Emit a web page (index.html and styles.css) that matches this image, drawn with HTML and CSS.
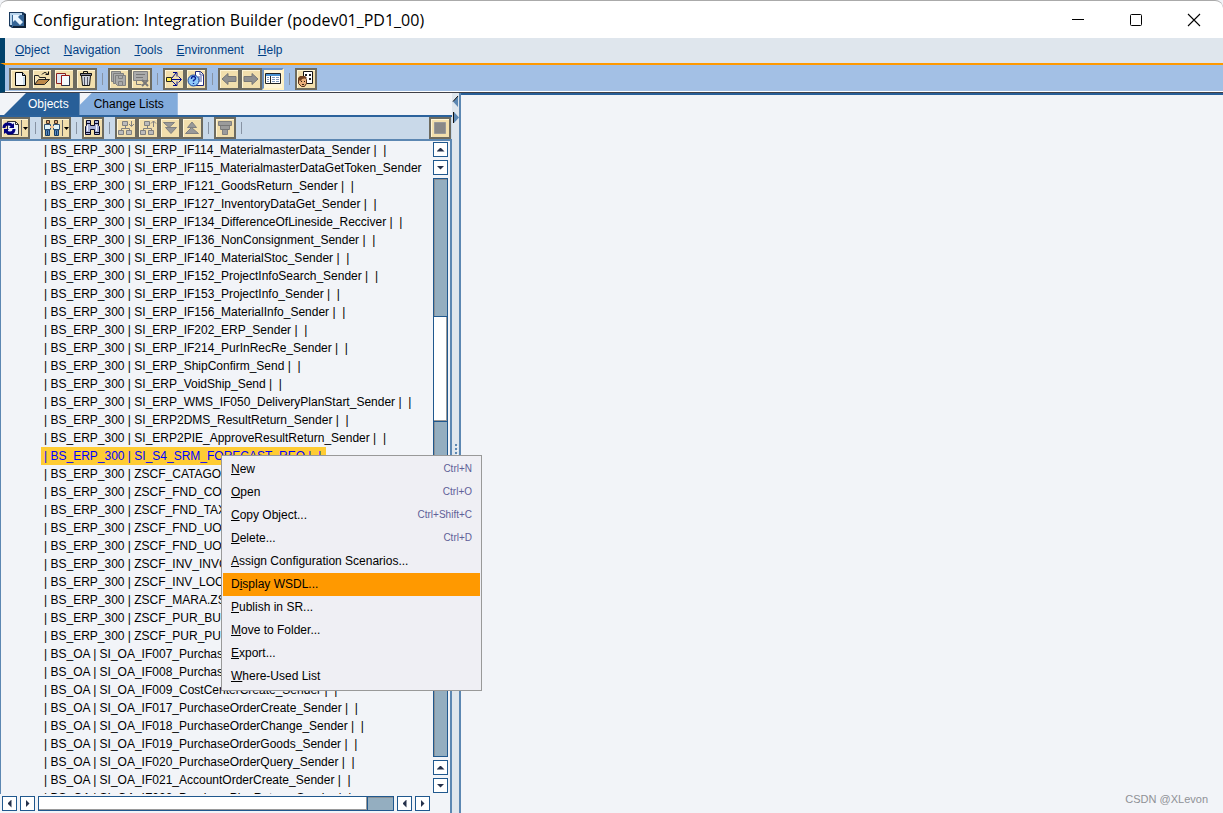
FILE: index.html
```html
<!DOCTYPE html>
<html lang="en">
<head>
<meta charset="utf-8">
<title>Configuration: Integration Builder (podev01_PD1_00)</title>
<link rel="stylesheet" href="styles.css">
</head>
<body>
<div class="window">
<header class="titlebar">
  <svg class="app-icon" width="18" height="18" viewBox="0 0 18 18"><path d="M0 1h14l3 2v14H3l-3-2z" fill="#18385c"/><path d="M1 2h12v12H1z" fill="#b8d4ec"/><path d="M3 4h12v12H3z" fill="#356596"/><path d="M4 4h7L9 6l5 5-3 3-5-5-2 2z" fill="#e7f4ff"/><path d="M15 3h2v14H4v-2h11z" fill="#102238"/></svg>
  <h1 class="title">Configuration: Integration Builder (podev01_PD1_00)</h1>
  <div class="window-controls">
    <button class="window-button" aria-label="Minimize"><svg width="14" height="14"><path d="M1 6.500h12" stroke="#000"/></svg></button>
    <button class="window-button" aria-label="Maximize"><svg width="14" height="14"><rect x="1.500" y="1.500" width="11" height="11" rx="1" fill="none" stroke="#000"/></svg></button>
    <button class="window-button" aria-label="Close"><svg width="14" height="14"><path d="M1 1l12 12M13 1L1 13" stroke="#000" stroke-width="1.100"/></svg></button>
  </div>
</header>
<nav class="menubar">
  <button class="menu"><u>O</u>bject</button>
  <button class="menu"><u>N</u>avigation</button>
  <button class="menu"><u>T</u>ools</button>
  <button class="menu"><u>E</u>nvironment</button>
  <button class="menu"><u>H</u>elp</button>
</nav>
<div class="toolbar main-toolbar">
  <button class="tool" aria-label="New"><svg width="18" height="18"><path d="M4.500 2.500h7l3 3v10h-10z" fill="#f4f8fb" stroke="#000"/><path d="M11.500 2.500v3h3" fill="#bcd" stroke="#000"/><path d="M13 7v8" stroke="#9fc0d8"/></svg></button>
  <button class="tool" aria-label="Open"><svg width="18" height="18"><path d="M1.500 14.500v-9h4l1 2h6v3" fill="#f7e6b8" stroke="#222"/><path d="M1.500 14.500l4-5h11l-5 5z" fill="#bb8748" stroke="#222"/><path d="M9 4.500q3-4 6 0M15.500 1.500v3h-3" fill="none" stroke="#111"/></svg></button>
  <button class="tool" aria-label="Copy"><svg width="18" height="18"><path d="M1.500 3.500h9v10h-9z" fill="#dce7f2" stroke="#8c2020"/><path d="M6.500 5.500h8v10h-8z" fill="#f6f9fd" stroke="#981414"/><path d="M14.500 6v9.500h-8" fill="none" stroke="#26324a"/></svg></button>
  <button class="tool" aria-label="Delete"><svg width="18" height="18"><path d="M6.500 3.500v-2h4v2M3 4h12" fill="none" stroke="#111"/><path d="M3.500 3.500h11v2h-11z" fill="#889" stroke="#111"/><path d="M4.500 5.500h9l-1 10h-7z" fill="#d1d5df" stroke="#111"/><path d="M7.500 7v8M10.500 7v8" stroke="#556"/></svg></button>
  <span class="separator"></span>
  <button class="tool" aria-label="Save all" disabled><svg width="18" height="18"><g fill="#aaa" stroke="#808080"><path d="M1.500 1.500h9v10h-9z"/><path d="M3.500 3.500h10v10h-10z"/><path d="M5.500 5.500h10v10h-8l-2-2z"/><path d="M8.500 5.500h4v3h-4zM8.500 11.500h4v4h-4z"/></g></svg></button>
  <button class="tool" aria-label="Discard" disabled><svg width="18" height="18"><path d="M1.500 1.500h14v9h-14z" fill="#aaa" stroke="#808080"/><path d="M4 4.500h9M4 7.500h7M4.500 11v3.500h5" stroke="#777" fill="none"/><path d="M10 10l6 6M16 10l-6 6" stroke="#777" stroke-width="2"/></svg></button>
  <span class="separator"></span>
  <button class="tool" aria-label="Where used"><svg width="18" height="18"><path d="M6 9.500h10M7 8l4-5M7 11l4 4M13.500 6.500l3 3-3 3M8 2.500h4v4M8 15.500h4v-4" fill="none" stroke="#000a8c"/><path d="M1.500 7.500h5v4h-5z" fill="#ffed4a" stroke="#222"/></svg></button>
  <button class="tool" aria-label="Help"><svg width="18" height="18"><path d="M8.500 1.500h5l3 3v11h-8z" fill="#fff" stroke="#1b267a"/><path d="M13 2v3h3M11 7h4M12 9h3M12 11h3" fill="none" stroke="#44549d"/><circle cx="6.500" cy="10.500" r="5.500" fill="#8fc9fa" stroke="#17429b"/><path d="M4.500 9V8.500q0-2 2-2t2 2q0 1-2 2v1M6.500 13v1" fill="none" stroke="#091f91" stroke-width="1.400"/></svg></button>
  <span class="separator"></span>
  <button class="tool" aria-label="Back" disabled><svg width="18" height="18"><path d="M2 9l6-5.500v3h8v5H8v3z" fill="#909090" stroke="#777"/></svg></button>
  <button class="tool" aria-label="Forward" disabled><svg width="18" height="18"><path d="M16 9l-6-5.500v3H2v5h8v3z" fill="#909090" stroke="#777"/></svg></button>
  <button class="tool pressed" aria-label="Navigation area" aria-pressed="true"><svg width="18" height="18"><path d="M1.500 3.500h15v10h-15z" fill="#fff" stroke="#222"/><path d="M2 4h14v2H2z" fill="#478fd0"/><path d="M6.500 6v7" stroke="#222"/><path d="M3 7.500h2M3 9.500h2M3 11.500h2M8 7.500h3M12 7.500h3M8 9.500h3M12 9.500h3M8 11.500h3M12 11.500h3" stroke="#8099bb"/></svg></button>
  <span class="separator"></span>
  <button class="tool" aria-label="User settings"><svg width="18" height="18"><path d="M6.500 1.500h9v12h-9z" fill="#fff" stroke="#111"/><path d="M8 4h2v2H8zM12 4h2v2h-2zM12 8h2v2h-2z" fill="#222"/><path d="M1.500 9.500l2-3h4l2 3v4l-2 3h-3l-3-3z" fill="#e8ae7a" stroke="#56301b"/><path d="M1 10V8l2-2h5l2 2-5 1-1 2z" fill="#72411f"/><path d="M4 11.500h1M7 11.500h1M5 14.500h2" stroke="#321"/></svg></button>
</div>
<main class="workspace">
  <section class="navigator">
    <div class="tabs" role="tablist">
      <button class="tab active" role="tab" aria-selected="true">Objects</button>
      <button class="tab" role="tab" aria-selected="false">Change Lists</button>
    </div>
    <div class="toolbar tree-toolbar">
      <button class="tool split" aria-label="Refresh"><svg width="26" height="18"><path d="M5.500 2.500h8l3 3v10h-11z" fill="#edf4fa" stroke="#333"/><path d="M13.500 2.500v3h3" fill="none" stroke="#333"/><path d="M2 9q0-4 4-4 3 0 4 2M12 10q0 4-4 4-3 0-4-2" fill="none" stroke="#00007f" stroke-width="3"/><path d="M12 4v5H7zM2 15v-5h5z" fill="#00007f"/><path d="M19.500 1v16" stroke="#666"/><path d="M21 8h5l-2.500 3z"/></svg></button>
      <span class="separator"></span>
      <button class="tool split" aria-label="Find by user"><svg width="26" height="18"><path d="M3.500 1.500h3v3h-3zM11.500 1.500h3v3h-3z" fill="#d9a071" stroke="#432"/><path d="M1.500 5.500h6v5h-6zM10.500 5.500h6v5h-6z" fill="#e2f4f8" stroke="#357"/><path d="M7 7h4v2H7z" fill="#f0c394"/><path d="M2.500 11v5.500h2V12v4.500h2V11zM11.500 11v5.500h2V12v4.500h2V11z" fill="#5a8ac0" stroke="#173f67"/><path d="M19.500 1v16" stroke="#666"/><path d="M21 8h5l-2.500 3z"/></svg></button>
      <span class="separator"></span>
      <button class="tool" aria-label="Find"><svg width="18" height="18"><path d="M2.500 1.500h4v5h4v-5h4v5l1 1v8h-5v-5h-4v5h-5v-8l1-1z" fill="#aab2d7" stroke="#0a0a28"/><path d="M2 4.500h5M10 4.500h5M2 13.500h5M10 13.500h5" stroke="#0a0a28"/><path d="M3.500 6v6M12.500 6v6" stroke="#f3f6ff"/></svg></button>
      <span class="separator"></span>
      <button class="tool" aria-label="Expand" disabled><svg width="18" height="18"><g fill="#bbb" stroke="#808080"><path d="M5.500 2.500h5v4h-5zM1.500 11.500h5v4h-5zM9.500 11.500h5v4h-5z"/><path d="M8.500 7v2M4.500 11.500V9.500h8v2M14.500 2v5M12 5l2.500 2.500L17 5" fill="none"/></g></svg></button>
      <button class="tool" aria-label="Collapse" disabled><svg width="18" height="18"><g fill="#bbb" stroke="#808080"><path d="M5.500 2.500h5v4h-5zM1.500 11.500h5v4h-5zM9.500 11.500h5v4h-5z"/><path d="M8.500 7v2M4.500 11.500V9.500h8v2M14.500 2v6M12 4.500L14.500 2 17 4.500" fill="none"/></g></svg></button>
      <button class="tool" aria-label="Expand all" disabled><svg width="18" height="18"><path d="M2.500 3.500h11l-5.500 5zM4.500 8.500h11l-5.500 6z" fill="#999" stroke="#808080"/></svg></button>
      <button class="tool" aria-label="Collapse all" disabled><svg width="18" height="18"><path d="M4.500 8.500L9 3l4.500 5.500zM2.500 14.500L8.500 8.500l7 6z" fill="#999" stroke="#808080"/></svg></button>
      <span class="separator"></span>
      <button class="tool" aria-label="Filter" disabled><svg width="18" height="18"><path d="M2.500 2.500h13v4h-2v4h-2v5h-5v-5h-2v-4h-2z" fill="#9b9b9b" stroke="#808080"/><path d="M3 6.500h12M5 10.500h8" stroke="#777"/></svg></button>
      <span class="separator"></span>
      <button class="tool stop" aria-label="Stop" disabled><svg width="18" height="18"><path d="M3.500 3.500h11v11h-11z" fill="#888" stroke="#999"/></svg></button>
    </div>
    <div class="tree-area">
      <ul class="tree">
        <li>| BS_ERP_300 | SI_ERP_IF114_MaterialmasterData_Sender |&nbsp; |</li>
        <li>| BS_ERP_300 | SI_ERP_IF115_MaterialmasterDataGetToken_Sender</li>
        <li>| BS_ERP_300 | SI_ERP_IF121_GoodsReturn_Sender |&nbsp; |</li>
        <li>| BS_ERP_300 | SI_ERP_IF127_InventoryDataGet_Sender |&nbsp; |</li>
        <li>| BS_ERP_300 | SI_ERP_IF134_DifferenceOfLineside_Recciver |&nbsp; |</li>
        <li>| BS_ERP_300 | SI_ERP_IF136_NonConsignment_Sender |&nbsp; |</li>
        <li>| BS_ERP_300 | SI_ERP_IF140_MaterialStoc_Sender |&nbsp; |</li>
        <li>| BS_ERP_300 | SI_ERP_IF152_ProjectInfoSearch_Sender |&nbsp; |</li>
        <li>| BS_ERP_300 | SI_ERP_IF153_ProjectInfo_Sender |&nbsp; |</li>
        <li>| BS_ERP_300 | SI_ERP_IF156_MaterialInfo_Sender |&nbsp; |</li>
        <li>| BS_ERP_300 | SI_ERP_IF202_ERP_Sender |&nbsp; |</li>
        <li>| BS_ERP_300 | SI_ERP_IF214_PurInRecRe_Sender |&nbsp; |</li>
        <li>| BS_ERP_300 | SI_ERP_ShipConfirm_Send |&nbsp; |</li>
        <li>| BS_ERP_300 | SI_ERP_VoidShip_Send |&nbsp; |</li>
        <li>| BS_ERP_300 | SI_ERP_WMS_IF050_DeliveryPlanStart_Sender |&nbsp; |</li>
        <li>| BS_ERP_300 | SI_ERP2DMS_ResultReturn_Sender |&nbsp; |</li>
        <li>| BS_ERP_300 | SI_ERP2PIE_ApproveResultReturn_Sender |&nbsp; |</li>
        <li class="selected">| BS_ERP_300 | SI_S4_SRM_FORECAST_REQ |&nbsp; |</li>
        <li>| BS_ERP_300 | ZSCF_CATAGO</li>
        <li>| BS_ERP_300 | ZSCF_FND_CO</li>
        <li>| BS_ERP_300 | ZSCF_FND_TAX</li>
        <li>| BS_ERP_300 | ZSCF_FND_UO</li>
        <li>| BS_ERP_300 | ZSCF_FND_UO</li>
        <li>| BS_ERP_300 | ZSCF_INV_INVO</li>
        <li>| BS_ERP_300 | ZSCF_INV_LOC</li>
        <li>| BS_ERP_300 | ZSCF_MARA.ZS</li>
        <li>| BS_ERP_300 | ZSCF_PUR_BU</li>
        <li>| BS_ERP_300 | ZSCF_PUR_PU</li>
        <li>| BS_OA | SI_OA_IF007_Purchase</li>
        <li>| BS_OA | SI_OA_IF008_Purchase</li>
        <li>| BS_OA | SI_OA_IF009_CostCenterCreate_Sender |&nbsp; |</li>
        <li>| BS_OA | SI_OA_IF017_PurchaseOrderCreate_Sender |&nbsp; |</li>
        <li>| BS_OA | SI_OA_IF018_PurchaseOrderChange_Sender |&nbsp; |</li>
        <li>| BS_OA | SI_OA_IF019_PurchaseOrderGoods_Sender |&nbsp; |</li>
        <li>| BS_OA | SI_OA_IF020_PurchaseOrderQuery_Sender |&nbsp; |</li>
        <li>| BS_OA | SI_OA_IF021_AccountOrderCreate_Sender |&nbsp; |</li>
        <li>| BS_OA | SI_OA_IF022_PurchasePlanReturn_Sender |&nbsp; |</li>
      </ul>
      <div class="scroll vertical">
        <button class="arrow up" aria-label="Scroll up"></button>
        <button class="arrow down" aria-label="Scroll down"></button>
        <div class="track"><div class="thumb"></div></div>
        <button class="arrow up" aria-label="Scroll up"></button>
        <button class="arrow down" aria-label="Scroll down"></button>
      </div>
    </div>
    <div class="scroll horizontal">
      <button class="arrow left" aria-label="Scroll left"></button>
      <button class="arrow right" aria-label="Scroll right"></button>
      <div class="track"><div class="thumb"></div></div>
      <button class="arrow left" aria-label="Scroll left"></button>
      <button class="arrow right" aria-label="Scroll right"></button>
    </div>
  </section>
  <div class="splitter">
    <svg width="7" height="32"><path d="M6 3v11L1 8.500z" fill="#5c87b2"/><path d="M6 3L1 8.500" stroke="#111" fill="none"/><path d="M2 19v11l5-5.500z" fill="#5c87b2"/><path d="M1.500 19v11" stroke="#111"/></svg>
    <svg width="7" height="14"><path d="M3 1h2v2H3zM3 5h2v2H3zM3 9h2v2H3z" fill="#5c87b2"/><path d="M5 3h1v1H5zM5 7h1v1H5zM5 11h1v1H5z" fill="#fff"/></svg>
  </div>
  <section class="editor"><span class="watermark">CSDN @XLevon</span></section>
</main>
<div class="context-menu" role="menu">
  <button class="item" role="menuitem"><span><u>N</u>ew</span><kbd>Ctrl+N</kbd></button>
  <button class="item" role="menuitem"><span><u>O</u>pen</span><kbd>Ctrl+O</kbd></button>
  <button class="item" role="menuitem"><span><u>C</u>opy Object...</span><kbd>Ctrl+Shift+C</kbd></button>
  <button class="item" role="menuitem"><span><u>D</u>elete...</span><kbd>Ctrl+D</kbd></button>
  <button class="item" role="menuitem"><span><u>A</u>ssign Configuration Scenarios...</span></button>
  <button class="item current" role="menuitem"><span>D<u>i</u>splay WSDL...</span></button>
  <button class="item" role="menuitem"><span><u>P</u>ublish in SR...</span></button>
  <button class="item" role="menuitem"><span><u>M</u>ove to Folder...</span></button>
  <button class="item" role="menuitem"><span><u>E</u>xport...</span></button>
  <button class="item" role="menuitem"><span><u>W</u>here-Used List</span></button>
</div>
</div>
</body>
</html>
```
FILE: styles.css
```css
* { box-sizing: border-box; }
body { margin: 0; background: #f2f4f8; color: #000; font: 12px/18px "Liberation Sans", Arial, sans-serif; }
button { border: 0; padding: 0; background: none; color: inherit; font: inherit; }
svg { display: block; flex: none; }
.window { position: relative; display: flex; flex-direction: column; height: 100vh; overflow: hidden; }

.titlebar { display: flex; align-items: center; flex: none; height: 38px; padding-left: 9px; background: #fff; border-top: 1px solid #aaa; border-radius: 8px 8px 0 0; }
.title { flex: 1; margin: 0; padding-left: 6px; font: 16px/24px "Open Sans", "Noto Sans", sans-serif; }
.window-controls { display: flex; height: 100%; }
.window-button { display: grid; place-items: center; width: 58px; }

.menubar { display: flex; align-items: center; gap: 14px; flex: none; height: 25px; padding: 0 10px 2px; background: #dfe6ed; border-left: 5px solid #00426b; color: #003f86; }
.toolbar { display: flex; align-items: center; flex: none; }
.main-toolbar { height: 30px; padding: 1px 4px 0; background: #a3c0e5; border-top: 2px solid #f90; border-left: 5px solid #00426b; border-bottom: 1px solid #404048; box-shadow: inset 0 -1px #fff; }
.tool { display: grid; place-items: center; flex: none; width: 22px; height: 22px; background: #f2dfad; border: 2px solid #6d6b60; box-shadow: inset 1px 1px #fff5d5; }
.tool.split { width: 30px; }
.tool.pressed { background: #fff5d8; border-color: #6e91bd #fff1c4 #fff1c4 #6e91bd; }
.separator { flex: none; width: 11px; height: 12px; background: linear-gradient(#8793a3, #8793a3) 5px 0 / 1px 100% no-repeat; }

.workspace { display: flex; flex: 1; min-height: 0; }
.navigator { display: flex; flex-direction: column; width: 452px; min-width: 0; border-right: 2px solid #5c87b2; }
.tabs { display: flex; flex: none; height: 24px; padding: 0 0 0 4px; margin-right: -2px; background: #f2f4f8; border-bottom: 2px solid #2b629c; }
.tab { padding: 0 14px; background: #82abdb; clip-path: polygon(12px 0, 100% 0, 100% 100%, 0 100%, 0 12px); }
.tab.active { padding: 0 11px 0 24px; background: #285f98; color: #fff; clip-path: polygon(22px 0, 100% 0, 100% 100%, 0 100%); }
.tree-toolbar { height: 24px; margin-right: -2px; padding-right: 1px; background: #c9d9e9; border-bottom: 2px solid #5c87b2; }
.tree-toolbar .tool { align-self: flex-start; }
.tree-toolbar .stop { margin-left: auto; }

.tree-area { display: flex; flex: 1; min-height: 0; border-left: 1px solid #5c87b2; }
.tree { flex: 1; min-width: 0; margin: 0; padding: 0 0 0 40px; overflow: hidden; list-style: none; white-space: nowrap; }
.tree li { width: max-content; height: 18px; padding: 0 5px 0 3px; }
.tree .selected { background: #fc3; color: #00f; }
.scroll { display: flex; flex: none; gap: 3px; }
.vertical { flex-direction: column; width: 17px; padding: 1px 2px 1px 0; }
.horizontal { height: 19px; padding: 2px 20px 2px 2px; }
.arrow { display: grid; place-items: center; flex: none; width: 15px; height: 15px; background: #fff; border: 1px solid #20588e; }
.arrow::before { content: ""; width: 8px; height: 4px; background: #25304a; clip-path: polygon(50% 0, 100% 100%, 0 100%); }
.arrow.down::before { clip-path: polygon(0 0, 100% 0, 50% 100%); }
.arrow.left::before { width: 4px; height: 8px; clip-path: polygon(100% 0, 100% 100%, 0 50%); }
.arrow.right::before { width: 4px; height: 8px; clip-path: polygon(0 0, 100% 50%, 0 100%); }
.track { display: flex; flex: 1; min-width: 0; min-height: 0; background: #94aec0; border: 1px solid #20588e; box-shadow: inset 1px 1px #8a8f94; }
.vertical .track { flex-direction: column; }
.vertical .track::before { content: ""; flex: 137; }
.vertical .track::after { content: ""; flex: 335; }
.vertical .thumb { flex: 105; border: solid #20588e; border-width: 1px 0; }
.thumb { background: #fff; box-shadow: inset -1px -1px #999; }
.horizontal .thumb { width: 93%; border-right: 1px solid #20588e; }
.splitter { display: flex; flex-direction: column; justify-content: space-between; flex: none; width: 9px; background: #dfe6ed; border-right: 2px solid #5c87b2; }
.splitter::after { content: ""; height: 38px; }
.editor { display: flex; flex: 1; align-items: flex-end; justify-content: flex-end; padding: 0 15px 5px; border-top: 2px solid #285f98; }
.watermark { color: #8f9196; font-size: 11px; }

.context-menu { position: absolute; left: 221px; top: 455px; width: 261px; padding: 2px 1px; background: #efeff4; border: 1px solid #999; }
.item { display: flex; align-items: center; justify-content: space-between; width: 100%; height: 23px; padding: 0 8px 2px; }
.item kbd { color: #606098; font: 10px/18px "Liberation Sans", Arial, sans-serif; }
.item.current { background: #f90; }
```
